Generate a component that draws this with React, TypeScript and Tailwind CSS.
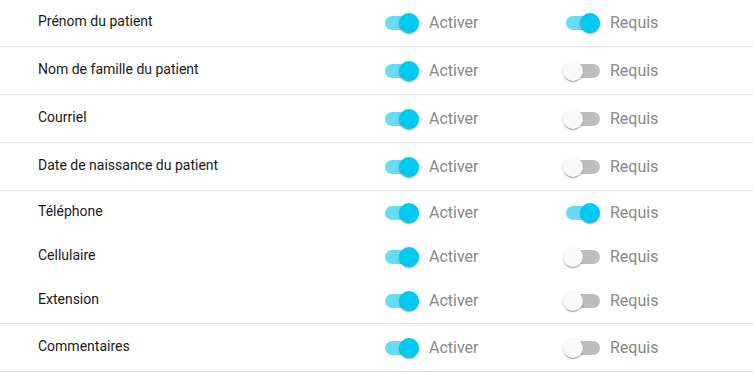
import React from "react";

function Switch({ on }: { on: boolean }) {
  return (
    <div className="relative w-[34px] h-[20px] shrink-0">
      <div
        className={
          "absolute left-0 top-[3px] w-[34px] h-[14px] rounded-[7px] " +
          (on ? "bg-[#66dcf5]" : "bg-[#bdbdbd]")
        }
      />
      <div
        className={
          "absolute top-0 w-[20px] h-[20px] rounded-full shadow-[0px_2px_1px_-1px_rgba(0,0,0,0.2),0px_1px_1px_0px_rgba(0,0,0,0.14),0px_1px_3px_0px_rgba(0,0,0,0.12)] " +
          (on ? "right-0 bg-[#00c9f2]" : "left-[-3px] bg-[#fafafa]")
        }
      />
    </div>
  );
}

function Row({
  label,
  req,
  className,
}: {
  label: string;
  req: boolean;
  className: string;
}) {
  return (
    <div className={"flex items-center pl-[38px] " + className}>
      <div className="w-[347px] text-[14px] font-normal text-[#1a1a1a] pb-[3px]">
        {label}
      </div>
      <Switch on={true} />
      <div className="ml-[10px] w-[137px] text-[16px] text-[#888888]">Activer</div>
      <Switch on={req} />
      <div className="ml-[10px] text-[16px] text-[#888888]">Requis</div>
    </div>
  );
}

export default function App() {
  const border = "h-[48px] border-b border-[#e0e0e0]";
  return (
    <div
      className="w-[753px] h-[373px] bg-white overflow-hidden"
      style={{ fontFamily: "Roboto, 'Liberation Sans', sans-serif" }}
    >
      <div className="-mt-px">
        <Row label="Prénom du patient" req={true} className={border} />
        <Row label="Nom de famille du patient" req={false} className={border} />
        <Row label="Courriel" req={false} className={border} />
        <Row label="Date de naissance du patient" req={false} className={border} />
        <div className="border-b border-[#e0e0e0]">
          <Row label="Téléphone" req={true} className="h-[44px]" />
          <Row label="Cellulaire" req={false} className="h-[44px]" />
          <Row label="Extension" req={false} className="h-[44px]" />
        </div>
        <Row label="Commentaires" req={false} className={border} />
      </div>
    </div>
  );
}
